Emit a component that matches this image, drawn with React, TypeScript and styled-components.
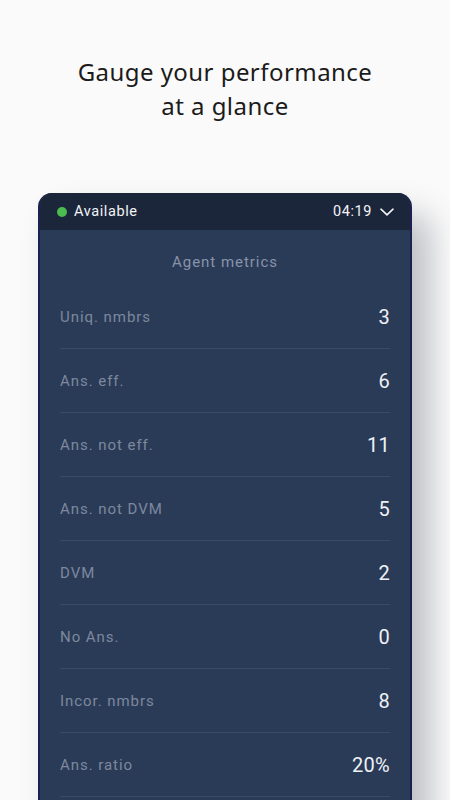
import React from "react";
import styled, { createGlobalStyle } from "styled-components";

const Global = createGlobalStyle`
  html, body { margin: 0; padding: 0; background: #fafafa; }
  body { overflow: hidden; }
`;

const Page = styled.div`
  width: 450px;
  height: 800px;
  overflow: hidden;
  background: #fafafa;
  display: flex;
  flex-direction: column;
  align-items: center;
`;

const Heading = styled.h1`
  margin: 55px 0 0;
  font-family: "Noto Sans", sans-serif;
  font-weight: 400;
  font-size: 24px;
  line-height: 34px;
  color: #1b1b1b;
  text-align: center;
  letter-spacing: 0.45px;
`;

const Card = styled.div`
  margin-top: 70px;
  width: 374px;
  flex: none;
  box-sizing: border-box;
  border-radius: 14px 14px 0 0;
  background: #2a3b58;
  border-left: 2px solid #1b2150;
  border-right: 2px solid #1b2150;
  box-shadow: 18px 22px 32px rgba(60, 66, 80, 0.32);
  overflow: hidden;
  height: 640px;
`;

const Header = styled.div`
  height: 37px;
  background: #1c263a;
  margin: 0 -2px;
  padding: 0 18px 0 19px;
  display: flex;
  align-items: center;
  justify-content: space-between;
  font-family: Roboto, sans-serif;
  font-size: 14.5px;
  color: #f2f4f8;
  letter-spacing: 0.6px;
`;

const Status = styled.div`
  display: flex;
  align-items: center;
  gap: 7px;
`;

const Dot = styled.span`
  width: 10px;
  height: 10px;
  border-radius: 50%;
  background: #4cbb4f;
`;

const Timer = styled.div`
  display: flex;
  align-items: center;
  gap: 8px;
`;

const Title = styled.div`
  padding: 20px 0 11px;
  line-height: 24px;
  text-align: center;
  font-family: Roboto, sans-serif;
  font-size: 15px;
  letter-spacing: 0.95px;
  color: #8893a8;
`;

const List = styled.div`
  padding: 0 20px;
`;

const Row = styled.div`
  height: 63px;
  border-bottom: 1px solid #3a4b67;
  display: flex;
  align-items: center;
  justify-content: space-between;
  font-family: Roboto, sans-serif;
`;

const Label = styled.span`
  font-size: 15px;
  letter-spacing: 0.95px;
  color: #7d889d;
`;

const Value = styled.span`
  font-size: 20px;
  color: #eef1f6;
  letter-spacing: 0.3px;
`;

const metrics: [string, string][] = [
  ["Uniq. nmbrs", "3"],
  ["Ans. eff.", "6"],
  ["Ans. not eff.", "11"],
  ["Ans. not DVM", "5"],
  ["DVM", "2"],
  ["No Ans.", "0"],
  ["Incor. nmbrs", "8"],
  ["Ans. ratio", "20%"],
];

export default function App() {
  return (
    <Page>
      <Global />
      <Heading>
        Gauge your performance
        <br />
        at a glance
      </Heading>
      <Card>
        <Header>
          <Status>
            <Dot />
            <span>Available</span>
          </Status>
          <Timer>
            <span>04:19</span>
            <svg width="14" height="8" viewBox="0 0 14 8" fill="none">
              <path d="M1 1.2 L7 6.8 L13 1.2" stroke="#f2f4f8" strokeWidth="1.6" strokeLinecap="round" strokeLinejoin="round" />
            </svg>
          </Timer>
        </Header>
        <Title>Agent metrics</Title>
        <List>
          {metrics.map(([l, v]) => (
            <Row key={l}>
              <Label>{l}</Label>
              <Value>{v}</Value>
            </Row>
          ))}
        </List>
      </Card>
    </Page>
  );
}
